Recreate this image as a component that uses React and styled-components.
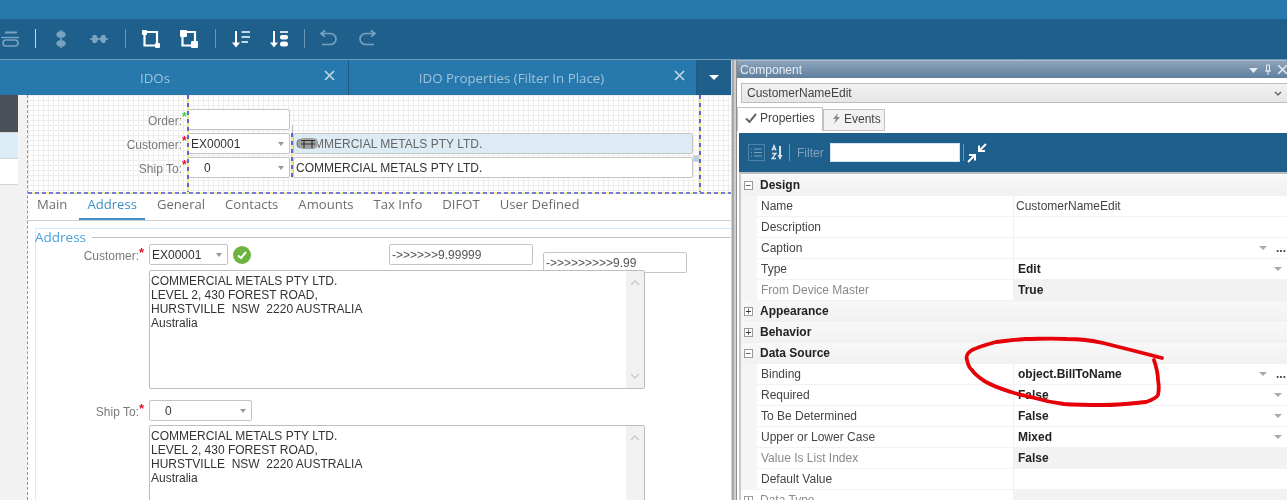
import React from "react";
import styled, { createGlobalStyle } from "styled-components";

const GlobalStyle = createGlobalStyle`
  html, body {
    margin: 0;
    padding: 0;
    background: #fff;
  }
  * {
    box-sizing: border-box;
  }
`;

const Page = styled.div`
  position: relative;
  width: 1287px;
  height: 500px;
  overflow: hidden;
  font-family: "Liberation Sans", Arial, sans-serif;
  font-size: 12px;
  color: #333;
  background: #fff;
  filter: blur(0.4px);
`;

const TopBar = styled.div`
  height: 19px;
  background: #2779ad;
`;

const Toolbar = styled.div`
  display: flex;
  align-items: center;
  height: 41px;
  padding-bottom: 1px;
  background: #1f5f8b;
  border-bottom: 1px solid #6f9cbc;
`;

const ToolCell = styled.div`
  display: flex;
  flex: none;
  align-items: center;
  justify-content: center;
  width: ${({ $w }) => $w || 38}px;
  margin-left: ${({ $ml }) => $ml || 0}px;
  color: ${({ $dim }) => ($dim ? "#7aa3c0" : "#fff")};
`;

const ToolSep = styled.div`
  flex: none;
  width: 1px;
  height: 19px;
  margin: 0 ${({ $m }) => ($m === undefined ? 6.5 : $m)}px;
  background: ${({ $dim }) => ($dim ? "#6f97b5" : "#c6d6e2")};
`;

const Body = styled.div`
  display: flex;
  height: 440px;
`;

const LeftPane = styled.div`
  display: flex;
  flex: none;
  flex-direction: column;
  width: 731px;
`;

const TabStrip = styled.div`
  display: flex;
  flex: none;
  height: 35px;
  background: #2779ad;
`;

const DocTab = styled.div`
  display: flex;
  flex: none;
  align-items: center;
  width: ${({ $w }) => $w}px;
  padding-left: ${({ $pl }) => $pl || 0}px;
  border-right: 1px solid #1c5a85;
  color: #9fc2da;
  font-family: "Open Sans", sans-serif;
  font-size: 13.3px;
`;

const DocTabTitle = styled.span`
  flex: 1;
  text-align: center;
`;

const DocTabClose = styled.div`
  display: flex;
  flex: none;
  align-items: center;
  justify-content: center;
  width: ${({ $w }) => $w || 38}px;
  padding-bottom: 4px;
  color: #c3d8e7;
`;

const TabMenu = styled.div`
  display: flex;
  flex: 1;
  align-items: center;
  justify-content: center;
  background: #1f5f8b;
  &::after {
    content: "";
    border-top: 5px solid #fff;
    border-left: 5px solid transparent;
    border-right: 5px solid transparent;
  }
`;

const Workspace = styled.div`
  display: flex;
  flex: 1;
  min-height: 0;
`;

const Gutter = styled.div`
  flex: none;
  width: 27px;
  background: #f2f2f2;
`;

const GutterItem = styled.div`
  width: 18px;
  height: ${({ $h }) => $h}px;
  background: ${({ $bg }) => $bg};
  border-bottom: 1px solid #d6d6d6;
`;

const Canvas = styled.div`
  flex: 1;
  min-width: 0;
  background: #fff;
  border-left: 1px dashed #6f97dc;
`;

const HeaderForm = styled.div`
  position: relative;
  display: flex;
  flex-direction: column;
  gap: 3px;
  height: 99px;
  padding-top: 14px;
  background-color: #fff;
  background-image: linear-gradient(#eeeeee 1px, transparent 1px),
    linear-gradient(90deg, #eeeeee 1px, transparent 1px);
  background-size: 5px 5px;
  &::after {
    content: "";
    position: absolute;
    left: 0;
    right: 0;
    bottom: 0;
    height: 2px;
    background: repeating-linear-gradient(90deg, #747cdc 0 4px, #f4eea6 4px 7px);
  }
`;

const HeaderRow = styled.div`
  display: grid;
  grid-template-columns: 160px 102px 403px;
  height: 21px;
`;

const FieldLabel = styled.div`
  display: flex;
  justify-content: flex-end;
  align-items: center;
  width: ${({ $w }) => ($w ? `${$w}px` : "auto")};
  flex: none;
  padding-right: ${({ $pr }) => $pr || 0}px;
  padding-top: 3px;
  color: #7a7a7a;
`;

const Star = styled.span`
  align-self: flex-start;
  width: ${({ $w }) => $w || 6}px;
  color: ${({ $green }) => ($green ? "#3ecb4e" : "#e2122a")};
  font-size: ${({ $size }) => $size || 12}px;
  font-weight: 700;
  line-height: 11px;
`;

const Field = styled.div`
  display: flex;
  align-items: center;
  width: ${({ $w }) => ($w ? `${$w}px` : "auto")};
  height: 21px;
  margin-left: ${({ $ml }) => $ml || 0}px;
  padding-left: ${({ $pl }) => ($pl === undefined ? 2 : $pl)}px;
  padding-right: 5px;
  background: ${({ $tint }) => ($tint ? "#dcebf4" : "#fff")};
  border: 1px solid #c4c4c4;
  border-radius: 2px;
  color: ${({ $tint }) => ($tint ? "#666" : "#333")};
  white-space: nowrap;
`;

const FieldCaret = styled.span`
  margin-left: auto;
  border-top: 4px solid #999;
  border-left: 3.5px solid transparent;
  border-right: 3.5px solid transparent;
`;

const MoveHandle = styled.div`
  position: absolute;
  left: 270px;
  top: 43px;
  display: flex;
  align-items: center;
  justify-content: center;
  width: 20px;
  height: 11px;
  background: #a0a0a0;
  border-radius: 6px;
  color: #333;
`;

const SizeGrip = styled.div`
  position: absolute;
  left: 665px;
  top: 60px;
  width: 7px;
  height: 7px;
  background: #b8cfe0;
  border: 1px solid #d6d6d6;
`;

const SizeTick = styled.div`
  position: absolute;
  left: 264px;
  top: 30px;
  width: 1px;
  height: 8px;
  background: #bdbdbd;
`;

const GuideLine = styled.div`
  position: absolute;
  left: ${({ $x }) => $x}px;
  top: ${({ $top }) => $top}px;
  width: 2px;
  height: ${({ $h }) => $h}px;
  background: repeating-linear-gradient(180deg, #5f66d8 0 4px, #f0e88a 4px 8px);
`;

const FormTabs = styled.div`
  display: flex;
  gap: 20px;
  height: 27px;
  padding-left: 9px;
  border-bottom: 1px solid #cfcfcf;
  font-family: "Open Sans", sans-serif;
  font-size: 13.1px;
`;

const FormTab = styled.div`
  position: relative;
  padding-top: 1px;
  color: ${({ $active }) => ($active ? "#3d8fc4" : "#6d6d6d")};
  &::after {
    content: "";
    display: ${({ $active }) => ($active ? "block" : "none")};
    position: absolute;
    left: -8px;
    right: -8px;
    bottom: 0;
    height: 2px;
    background: #3d8fc4;
  }
`;

const Group = styled.div`
  position: relative;
  margin: 7px 0 0 7px;
  padding-top: 1px;
  border-top: 1px solid #d4ebfa;
  border-left: 1px solid #d4ebfa;
`;

const Legend = styled.div`
  display: flex;
  align-items: center;
  height: 14px;
  margin-left: -1px;
  color: #46a3e0;
  font-family: "Open Sans", sans-serif;
  font-size: 13.5px;
  &::after {
    content: "";
    flex: 1;
    height: 1px;
    margin-left: 6px;
    background: #c2c2c2;
  }
`;

const FormRow = styled.div`
  display: flex;
  align-items: center;
  margin-top: ${({ $mt }) => $mt || 0}px;
`;

const GroupLabel = styled(FieldLabel)`
  width: 113px;
  height: 21px;
`;

const CheckBadge = styled.div`
  display: flex;
  align-items: center;
  justify-content: center;
  width: 18px;
  height: 18px;
  margin-left: 5px;
  background: #6db33f;
  border-radius: 50%;
  color: #fff;
`;

const FloatField = styled(Field)`
  position: absolute;
  left: ${({ $x }) => $x}px;
  top: ${({ $y }) => $y}px;
  color: #555;
`;

const AddressBox = styled.div`
  position: relative;
  z-index: 1;
  display: flex;
  width: 496px;
  height: 119px;
  margin: ${({ $mt }) => $mt}px 0 0 113px;
  background: #fff;
  border: 1px solid #bdbdbd;
  border-radius: 2px;
`;

const AddressText = styled.div`
  flex: 1;
  padding: 3px 0 0 1px;
  line-height: 14px;
  white-space: pre;
`;

const ScrollBar = styled.div`
  display: flex;
  flex: none;
  flex-direction: column;
  justify-content: space-between;
  align-items: center;
  width: 18px;
  padding: 9px 0;
  background: #f1f1f1;
  color: #c8c8c8;
`;

const Splitter = styled.div`
  flex: none;
  width: 6px;
  background: linear-gradient(90deg, #d2d2d2 0 1px, #a8a8a8 1px 3px, #cfcfcf 3px 5px, #8e8e8e 5px);
`;

const RightPane = styled.div`
  flex: 1;
  min-width: 0;
  background: #fff;
`;

const PaneTitle = styled.div`
  display: flex;
  align-items: center;
  height: 18px;
  padding: 0 0 0 3px;
  background: linear-gradient(#8da3b9, #5f7f9f);
  border-top: 1px solid #a9bbcc;
  color: #e6edf3;
`;

const PaneActions = styled.div`
  display: flex;
  align-items: center;
  gap: 6px;
  margin-left: auto;
  color: #e4ebf1;
`;

const Combo = styled.div`
  display: flex;
  align-items: center;
  justify-content: space-between;
  height: 20px;
  margin: 5px 0 0 4px;
  padding: 0 5px;
  background: linear-gradient(#f1f1f1, #e6e6e6);
  border: 1px solid #bdbdbd;
  border-right: none;
  color: #444;
`;

const PaneTabs = styled.div`
  display: flex;
  height: 26px;
  margin-top: 4px;
  padding-bottom: 1px;
`;

const PaneTab = styled.div`
  display: flex;
  align-items: center;
  gap: 3px;
  width: ${({ $w }) => $w}px;
  height: ${({ $active }) => ($active ? 24 : 22)}px;
  margin-top: ${({ $active }) => ($active ? 0 : 2)}px;
  padding: 0 0 3px ${({ $active }) => ($active ? 7 : 8)}px;
  background: ${({ $active }) => ($active ? "#fff" : "#f2f2f2")};
  border: 1px solid #c2c2c2;
  border-bottom: ${({ $active }) => ($active ? "none" : "1px solid #c2c2c2")};
  color: #444;
  svg {
    flex: none;
  }
`;

const PaneToolbar = styled.div`
  display: flex;
  align-items: center;
  height: 39px;
  margin-left: 2px;
  background: #1f5f8b;
`;

const BarSep = styled.div`
  flex: none;
  width: 1px;
  height: 17px;
  margin: ${({ $m }) => $m};
  background: #6f97b5;
`;

const FilterLabel = styled.span`
  margin-right: 6px;
  color: #7fa3bd;
`;

const FilterInput = styled.div`
  width: 130px;
  height: 19px;
  background: #fff;
  border: 1px solid #d3e4f0;
`;

const PropGrid = styled.div`
  margin-left: 2px;
  padding-top: 1px;
  border-top: 2px solid #bdbdbd;
  border-left: 2px solid #c9c9c9;
`;

const CategoryRow = styled.div`
  display: grid;
  grid-template-columns: 16px 256px 1fr;
  height: 21px;
  align-items: center;
  background: ${({ $muted }) => ($muted ? "#fff" : "linear-gradient(#f8f8f8, #f1f1f1)")};
  color: ${({ $muted }) => ($muted ? "#8a8a8a" : "#222")};
  font-weight: ${({ $muted }) => ($muted ? 400 : 700)};
`;

const Expander = styled.div`
  display: flex;
  align-items: center;
  justify-content: center;
  width: 9px;
  height: 9px;
  margin: -1px 0 0 3px;
  background: #fff;
  border: 1px solid #9b9b9b;
  color: #333;
  font-size: 10px;
  font-weight: 400;
  line-height: 7px;
`;

const CategoryName = styled.span`
  margin-top: -1px;
  padding-left: 3px;
`;

const CategoryValue = styled.div`
  align-self: stretch;
  background: ${({ $muted }) => ($muted ? "#f2f2f2" : "transparent")};
`;

const PropRow = styled.div`
  display: grid;
  grid-template-columns: 16px 256px 1fr;
  height: 21px;
  background: #f5f5f5;
`;

const PropName = styled.div`
  display: flex;
  align-items: center;
  padding-left: 4px;
  background: #fff;
  border-bottom: 1px solid #f2f2f2;
  color: ${({ $muted }) => ($muted ? "#8a8a8a" : "#444")};
`;

const PropValue = styled.div`
  display: flex;
  align-items: center;
  padding-left: ${({ $strong }) => ($strong ? 4 : 2)}px;
  background: ${({ $locked }) => ($locked ? "#f2f2f2" : "#fff")};
  border-left: 1px solid #efefef;
  border-bottom: 1px solid #f2f2f2;
  color: ${({ $strong }) => ($strong ? "#222" : "#444")};
  font-weight: ${({ $strong }) => ($strong ? 700 : 400)};
`;

const ValueCaret = styled.span`
  margin-left: auto;
  margin-right: ${({ $dots }) => ($dots ? 2 : 5)}px;
  border-top: 4px solid #aaa;
  border-left: 4px solid transparent;
  border-right: 4px solid transparent;
`;

const ValueDots = styled.span`
  width: 18px;
  padding-left: 7px;
  color: #444;
  font-weight: 700;
  line-height: 10px;
`;

const Scribble = styled.svg`
  position: absolute;
  left: 0;
  top: 0;
  pointer-events: none;
`;

// toolbar glyphs, all on a 20x20 box
const Glyph = ({ size = 20, children }) => (
  <svg width={size} height={size} viewBox="0 0 20 20" fill="none" stroke="currentColor" strokeWidth="1.6">
    {children}
  </svg>
);

const AlignIcon = () => (
  <Glyph>
    <path d="M5 3.500h12" strokeWidth="2" />
    <path d="M1 8.500h18" strokeWidth="1.400" />
    <rect x="3" y="11" width="15" height="6" rx="3" />
  </Glyph>
);

const DistributeV = () => (
  <Glyph>
    <path d="M10 1v18" />
    <path d="M7 2.500h6l2 3-2 3H7l-2-3zM7 11.500h6l2 3-2 3H7l-2-3z" fill="currentColor" stroke="none" />
  </Glyph>
);

const DistributeH = () => (
  <Glyph>
    <path d="M1 10h18" />
    <path d="M4 6h3l2 3v2l-2 3H4l-1-3V9zM13 6h3l1 3v2l-1 3h-3l-2-3V9z" fill="currentColor" stroke="none" />
  </Glyph>
);

const LayerIcon = ({ big }) => {
  const c = big ? 7 : 5;
  return (
    <Glyph>
      <path d="M3.500 3h12.500v13.500H3.500z" strokeWidth="2.200" />
      <rect x="1" y="1" width={c} height={c} rx="1" fill="currentColor" stroke="none" />
      <rect x={19 - c} y={19 - c} width={c} height={c} rx="1" fill="currentColor" stroke="none" />
    </Glyph>
  );
};

const SortLines = () => (
  <Glyph>
    <path d="M5 2v13" strokeWidth="2" />
    <path d="M1 13.500h8l-4 5z" fill="currentColor" stroke="none" />
    <path d="M10.500 3h8.500M10.500 8h8.500M10.500 13h6.500" strokeWidth="1.500" />
  </Glyph>
);

const SortBlocks = () => (
  <Glyph>
    <path d="M5 2v13" strokeWidth="2" />
    <path d="M1 13.500h8l-4 5z" fill="currentColor" stroke="none" />
    <path d="M11 3h8" strokeWidth="1.600" />
    <rect x="11" y="6" width="8" height="4.500" rx="2" fill="currentColor" stroke="none" />
    <rect x="11" y="12.500" width="8" height="5" rx="2.500" fill="currentColor" stroke="none" />
  </Glyph>
);

const UndoIcon = () => (
  <Glyph>
    <path d="M2 4.500h9.500a5.500 5.500 0 0 1 0 11H3" />
    <path d="M6 1.500 2 4.500l4 3" />
  </Glyph>
);

const RedoIcon = () => (
  <Glyph>
    <path d="M18 4.500H8.500a5.500 5.500 0 0 0 0 11H17" />
    <path d="M14 1.500l4 3-4 3" />
  </Glyph>
);

const CloseIcon = () => (
  <svg width="11" height="11" viewBox="0 0 11 11" fill="none" stroke="currentColor" strokeWidth="1.6">
    <path d="M1 1l9 9M10 1l-9 9" />
  </svg>
);

const Chevron = ({ up }) => (
  <svg width="10" height="6" viewBox="0 0 10 6" fill="none" stroke="currentColor" strokeWidth="1.3">
    <path d={up ? "M1 5l4-4 4 4" : "M1 1l4 4 4-4"} />
  </svg>
);

const ADDRESS = `COMMERCIAL METALS PTY LTD.
LEVEL 2, 430 FOREST ROAD,
HURSTVILLE  NSW  2220 AUSTRALIA
Australia`;

const TABS = ["Main", "Address", "General", "Contacts", "Amounts", "Tax Info", "DIFOT", "User Defined"];

const PROPS = [
  { category: "Design", open: true },
  { name: "Name", value: "CustomerNameEdit" },
  { name: "Description" },
  { name: "Caption", caret: true, dots: true },
  { name: "Type", value: "Edit", strong: true, caret: true },
  { name: "From Device Master", value: "True", strong: true, muted: true, locked: true },
  { category: "Appearance" },
  { category: "Behavior" },
  { category: "Data Source", open: true },
  { name: "Binding", value: "object.BillToName", strong: true, caret: true, dots: true },
  { name: "Required", value: "False", strong: true, caret: true },
  { name: "To Be Determined", value: "False", strong: true, caret: true },
  { name: "Upper or Lower Case", value: "Mixed", strong: true, caret: true },
  { name: "Value Is List Index", value: "False", strong: true, muted: true, locked: true },
  { name: "Default Value" },
  { category: "Data Type", muted: true },
];

const AddressField = ({ top }) => (
  <AddressBox $mt={top}>
    <AddressText>{ADDRESS}</AddressText>
    <ScrollBar>
      <Chevron up />
      <Chevron />
    </ScrollBar>
  </AddressBox>
);

const App = () => (
  <Page>
    <GlobalStyle />
    <TopBar />
    <Toolbar>
      <ToolCell $w={36} $ml={-8} $dim><AlignIcon /></ToolCell>
      <ToolSep />
      <ToolCell $dim><DistributeV /></ToolCell>
      <ToolCell $dim><DistributeH /></ToolCell>
      <ToolSep $dim />
      <ToolCell><LayerIcon /></ToolCell>
      <ToolCell><LayerIcon big /></ToolCell>
      <ToolSep $dim />
      <ToolCell><SortLines /></ToolCell>
      <ToolCell><SortBlocks /></ToolCell>
      <ToolSep $dim $m={5.5} />
      <ToolCell $dim><UndoIcon /></ToolCell>
      <ToolCell $dim><RedoIcon /></ToolCell>
    </Toolbar>
    <Body>
      <LeftPane>
        <TabStrip>
          <DocTab $w={349}>
            <DocTabTitle>IDOs</DocTabTitle>
            <DocTabClose><CloseIcon /></DocTabClose>
          </DocTab>
          <DocTab $w={348} $pl={12}>
            <DocTabTitle>IDO Properties (Filter In Place)</DocTabTitle>
            <DocTabClose $w={34}><CloseIcon /></DocTabClose>
          </DocTab>
          <TabMenu />
        </TabStrip>
        <Workspace>
          <Gutter>
            <GutterItem $h={38} $bg="#4b4f57" />
            <GutterItem $h={26} $bg="#dcedf7" />
            <GutterItem $h={26} $bg="#fff" />
          </Gutter>
          <Canvas>
            <HeaderForm>
              <HeaderRow>
                <FieldLabel>Order:<Star $green>*</Star></FieldLabel>
                <Field />
              </HeaderRow>
              <HeaderRow>
                <FieldLabel>Customer:<Star>*</Star></FieldLabel>
                <Field>EX00001<FieldCaret /></Field>
                <Field $ml={3} $tint>COMMERCIAL METALS PTY LTD.</Field>
              </HeaderRow>
              <HeaderRow>
                <FieldLabel>Ship To:<Star>*</Star></FieldLabel>
                <Field $pl={15}>0<FieldCaret /></Field>
                <Field $ml={3}>COMMERCIAL METALS PTY LTD.</Field>
              </HeaderRow>
              <MoveHandle>
                <svg width="16" height="9" viewBox="0 0 16 9" fill="none" stroke="currentColor" strokeWidth="1.2">
                  <path d="M1 1.500h14M1 5h14M4 1.500V9M12 1.500V9" />
                </svg>
              </MoveHandle>
              <SizeGrip />
              <SizeTick />
              <GuideLine $x={159} $top={0} $h={97} />
              <GuideLine $x={263} $top={38} $h={45} />
              <GuideLine $x={671} $top={0} $h={97} />
            </HeaderForm>
            <FormTabs>
              {TABS.map((tab) => (
                <FormTab key={tab} $active={tab === "Address"}>{tab}</FormTab>
              ))}
            </FormTabs>
            <Group>
              <Legend>Address</Legend>
              <FormRow>
                <GroupLabel>Customer:<Star $w={10} $size={13}>*</Star></GroupLabel>
                <Field $w={79}>EX00001<FieldCaret /></Field>
                <CheckBadge>
                  <svg width="12" height="12" viewBox="0 0 12 12" fill="none" stroke="currentColor" strokeWidth="2">
                    <path d="M2 6.500 5 9l5-6" />
                  </svg>
                </CheckBadge>
              </FormRow>
              <FloatField $x={353} $y={15} $w={144}>-&gt;&gt;&gt;&gt;&gt;&gt;9.99999</FloatField>
              <FloatField $x={507} $y={23} $w={144}>-&gt;&gt;&gt;&gt;&gt;&gt;&gt;&gt;&gt;9.99</FloatField>
              <AddressField top={5} />
              <FormRow $mt={11}>
                <GroupLabel>Ship To:<Star $w={10} $size={13}>*</Star></GroupLabel>
                <Field $w={103} $pl={15}>0<FieldCaret /></Field>
              </FormRow>
              <AddressField top={4} />
            </Group>
          </Canvas>
        </Workspace>
      </LeftPane>
      <Splitter />
      <RightPane>
        <PaneTitle>
          Component
          <PaneActions>
            <svg width="9" height="6" viewBox="0 0 9 6" fill="currentColor"><path d="M0 1h9L4.500 6z" /></svg>
            <svg width="8" height="11" viewBox="0 0 8 11" fill="none" stroke="currentColor"><path d="M2.500 1h3v6h-3zM1 7h6M4 7v4" /></svg>
            <svg width="9" height="9" viewBox="0 0 9 9" fill="none" stroke="currentColor" strokeWidth="1.5"><path d="M0 0l9 9M9 0L0 9" /></svg>
          </PaneActions>
        </PaneTitle>
        <Combo>
          CustomerNameEdit
          <svg width="8" height="5" viewBox="0 0 8 5" fill="none" stroke="#555" strokeWidth="1.2"><path d="M1 1l3 3 3-3" /></svg>
        </Combo>
        <PaneTabs>
          <PaneTab $w={86} $active>
            <svg width="12" height="10" viewBox="0 0 12 10" fill="none" stroke="#666" strokeWidth="2"><path d="M1 5.500 4.500 9 11 1" /></svg>
            Properties
          </PaneTab>
          <PaneTab $w={62}>
            <svg width="9" height="11" viewBox="0 0 9 11" fill="#888"><path d="M6 0 1 6h3l-2 5 6-7H5z" /></svg>
            Events
          </PaneTab>
        </PaneTabs>
        <PaneToolbar>
          <svg style={{ marginLeft: 9 }} width="17" height="17" viewBox="0 0 17 17" fill="none" stroke="#4f82a6">
            <rect x="0.500" y="0.500" width="16" height="16" />
            <path d="M3 5h1M3 8.500h1M3 12h1M6 5h8M6 8.500h8M6 12h8" stroke="#7aa3c0" />
          </svg>
          <svg style={{ marginLeft: 6 }} width="12" height="17" viewBox="0 0 12 17" fill="none" stroke="#d5e2ec" strokeWidth="1.3">
            <path d="M1 6.500l2-5 2 5M1.500 5h3M1 9.500h4l-4 5h4" />
            <path d="M9 2v10" strokeWidth="2" />
            <path d="M6.500 11h5L9 16z" fill="#d5e2ec" stroke="none" />
          </svg>
          <BarSep $m="0 7px 0 6px" />
          <FilterLabel>Filter</FilterLabel>
          <FilterInput />
          <BarSep $m="0 3px 0 3px" />
          <svg width="20" height="20" viewBox="0 0 20 20" fill="none" stroke="#fff" strokeWidth="2">
            <path d="M19 1l-7 7M12 2.500V8h6M1 19l7-7M8 17.500V12H2" />
          </svg>
        </PaneToolbar>
        <PropGrid>
          {PROPS.map((prop) =>
            prop.category ? (
              <CategoryRow key={prop.category} $muted={prop.muted}>
                <Expander>{prop.open ? "−" : "+"}</Expander>
                <CategoryName>{prop.category}</CategoryName>
                <CategoryValue $muted={prop.muted} />
              </CategoryRow>
            ) : (
              <PropRow key={prop.name}>
                <span />
                <PropName $muted={prop.muted}>{prop.name}</PropName>
                <PropValue $strong={prop.strong} $locked={prop.locked}>
                  {prop.value}
                  {prop.caret && <ValueCaret $dots={prop.dots} />}
                  {prop.dots && <ValueDots>...</ValueDots>}
                </PropValue>
              </PropRow>
            )
          )}
        </PropGrid>
      </RightPane>
    </Body>
    <Scribble width="1287" height="500" viewBox="0 0 1287 500" fill="none">
      <path
        d="M1162 358 L1131 350 L1103 343 C1090 340 1080 339 1067 339 C1050 338 1040 339 1025 339 C1012 340 1005 341 996 342 C985 345 978 347 972 350 C966 354 966 357 967 360 C968 365 969 368 972 370 C976 376 980 378 986 382 C995 387 1002 389 1011 392 C1020 395 1028 396 1035 398 C1045 401 1055 403 1064 404 C1078 405 1090 405 1103 405 C1120 405 1135 403 1146 402 C1152 400 1156 398 1158 395 C1159 390 1159 385 1158 380 C1158 372 1156 366 1154 360"
        stroke="#e60008"
        strokeWidth="3.800"
        strokeLinecap="round"
        strokeLinejoin="round"
      />
    </Scribble>
  </Page>
);

export default App;
